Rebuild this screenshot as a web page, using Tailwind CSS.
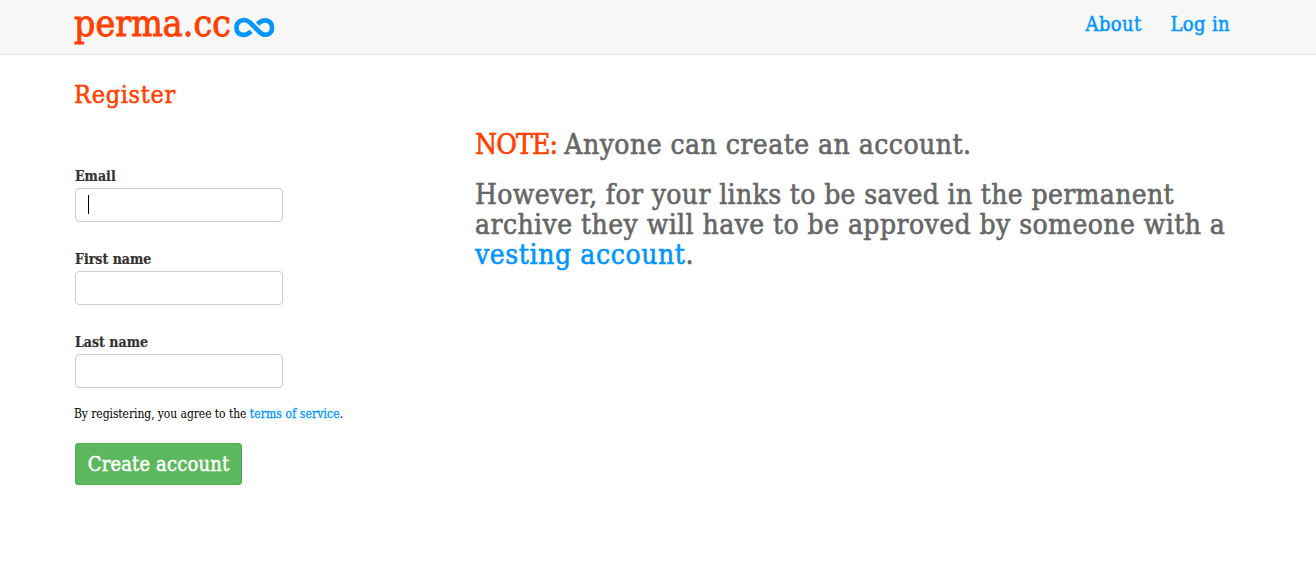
<!DOCTYPE html>
<html lang="en">
<head>
<meta charset="utf-8">
<title>Perma.cc</title>
<script src="https://cdn.jsdelivr.net/npm/@tailwindcss/browser@4"></script>
</head>
<body class="h-[565px] overflow-hidden bg-white font-['DejaVu_Serif_Condensed','DejaVu_Serif',serif] whitespace-nowrap text-[#333]">
<header class="flex h-[55px] justify-between border-b border-[#e7e7e7] bg-[#f7f7f7] pr-[86px] pl-[74px]">
  <a class="flex text-[#ff4000]"><span class="w-[160px] text-[37px] leading-[48px] tracking-[0.1px] [-webkit-text-stroke:0.9px_currentColor]">perma.cc</span>
    <svg class="mt-[17px]" width="41" height="21" viewBox="0 0 41 21" fill="none" stroke="#0096ff" stroke-width="4.6"><path d="M17 14.300C10 21 2.500 17.500 2.500 10.700C2.500 3.500 10 0.500 16 5.500L25 14.500C31 20.500 38 17.500 38 10.700C38 3.500 30.500 0.500 23.500 7"/></svg>
  </a>
  <nav class="flex gap-[29px] text-[20px] leading-[48px] tracking-[0.35px] text-[#0096ff] [-webkit-text-stroke:0.5px_currentColor]"><a>About</a><a>Log in</a></nav>
</header>
<main class="flex pl-[74px]">
  <section class="w-[401px]">
    <h1 class="mt-[25px] text-[25px] leading-[30px] tracking-[0.7px] text-[#ff4000] [-webkit-text-stroke:0.5px_currentColor]">Register</h1>
    <form class="mt-[56px]">
      <label class="ml-px block h-[22px] text-[14px] leading-[20px] font-bold [-webkit-text-stroke:0.2px_currentColor]">Email</label>
      <div class="ml-px h-[34px] w-[208px] rounded border border-[#ccc] px-[12px] py-[6px]"><div class="h-[19px] w-px bg-black"></div></div>
      <label class="mt-[27px] ml-px block h-[22px] text-[14px] leading-[20px] font-bold [-webkit-text-stroke:0.2px_currentColor]">First name</label>
      <div class="ml-px h-[34px] w-[208px] rounded border border-[#ccc]"></div>
      <label class="mt-[27px] ml-px block h-[22px] text-[14px] leading-[20px] font-bold [-webkit-text-stroke:0.2px_currentColor]">Last name</label>
      <div class="ml-px h-[34px] w-[208px] rounded border border-[#ccc]"></div>
      <p class="mt-[16px] text-[12px] leading-[20px] tracking-[-0.07px] text-black">By registering, you agree to the <a class="tracking-[0.12px] text-[#0096ff] [-webkit-text-stroke:0.3px_currentColor]">terms of service</a>.</p>
      <button type="button" class="mt-[19px] ml-px h-[42px] w-[167px] rounded-[3px] border border-[#4cae4c] bg-[#5cb85c] text-[20px] tracking-[0.15px] text-white [-webkit-text-stroke:0.5px_currentColor]">Create account</button>
    </form>
  </section>
  <section class="pt-[75px] text-[28px] leading-[30px] text-[#666] [-webkit-text-stroke:0.6px_currentColor]">
    <p class="tracking-[0.47px]"><span class="tracking-[-0.85px] text-[#ff4000]">NOTE: </span>Anyone can create an account.</p>
    <p class="mt-[20px] tracking-[0.35px]">However, for your links to be saved in the permanent<br><span class="tracking-[0.43px]">archive they will have to be approved by someone with a</span><br><a class="tracking-[0.6px] text-[#0096ff]">vesting account</a>.</p>
  </section>
</main>
</body>
</html>
